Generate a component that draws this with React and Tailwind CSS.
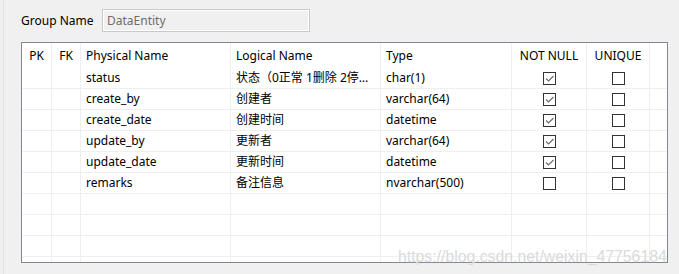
import React from "react";

const cols = [
  { w: "w-[30px]", align: "center" },
  { w: "w-[29px]", align: "center" },
  { w: "w-[150px]", align: "left", pl: "pl-[5px]" },
  { w: "w-[150px]", align: "left", pl: "pl-[5px]" },
  { w: "w-[131px]", align: "left", pl: "pl-[5px]" },
  { w: "w-[75px]", align: "center" },
  { w: "w-[63px]", align: "center" },
];

const rows = [
  ["status", "状态（0正常 1删除 2停用）", "char(1)", true, false],
  ["create_by", "创建者", "varchar(64)", true, false],
  ["create_date", "创建时间", "datetime", true, false],
  ["update_by", "更新者", "varchar(64)", true, false],
  ["update_date", "更新时间", "datetime", true, false],
  ["remarks", "备注信息", "nvarchar(500)", false, false],
  null,
  null,
  null,
  null,
];

function Box({ checked }) {
  return (
    <div className="w-[13px] h-[13px] border border-[#333333] bg-white flex items-center justify-center">
      {checked && (
        <svg width="11" height="11" viewBox="0 0 11 11">
          <path d="M2 5.5 L4.5 8 L9.5 3" fill="none" stroke="#6a6a6a" strokeWidth="1.1" />
        </svg>
      )}
    </div>
  );
}

function Cell({ i, children, header }) {
  const c = cols[i];
  return (
    <div
      className={`${c.w} shrink-0 h-full flex items-center border-r border-[#efefef] overflow-hidden whitespace-nowrap ${
        c.align === "center" ? "justify-center" : "justify-start pr-[4px] " + c.pl
      } ${header ? "border-[#e6e6e6]" : ""}`}
    >
      {children}
    </div>
  );
}

export default function App() {
  const font = { fontFamily: '"Noto Sans", "Noto Sans CJK SC", sans-serif' };
  return (
    <div
      className="relative w-[679px] h-[274px] bg-[#f0f0f0] pl-[3px] overflow-hidden text-[12px] text-[#000]"
      style={font}
    >
      <div className="h-full border-l border-[#e2e2e2] pl-[17px] pt-[9px]">
        <div className="flex items-center h-[23px]">
          <div className="w-[81px] leading-none">Group Name</div>
          <div className="w-[208px] h-[23px] border border-[#c9c9c9] shadow-[inset_0_0_0_1px_#ffffff] flex items-center pl-[4px] text-[#6d6d6d]">
            DataEntity
          </div>
        </div>
        <div className="mt-[10px] w-[647px] h-[221px] border border-[#828790] bg-white overflow-hidden">
          <div className="flex h-[25px]">
            <Cell i={0} header>PK</Cell>
            <Cell i={1} header>FK</Cell>
            <Cell i={2} header>Physical Name</Cell>
            <Cell i={3} header>Logical Name</Cell>
            <Cell i={4} header>Type</Cell>
            <Cell i={5} header>NOT NULL</Cell>
            <Cell i={6} header>UNIQUE</Cell>
            <div className="flex-1" />
          </div>
          {rows.map((r, k) => (
            <div key={k} className="flex h-[21px] border-b border-[#efefef]">
              <Cell i={0} />
              <Cell i={1} />
              <Cell i={2}>{r && r[0]}</Cell>
              <Cell i={3}>
                {r && <span className="block overflow-hidden text-ellipsis">{r[1]}</span>}
              </Cell>
              <Cell i={4}>{r && r[2]}</Cell>
              <Cell i={5}>{r && <Box checked={r[3]} />}</Cell>
              <Cell i={6}>{r && <Box checked={r[4]} />}</Cell>
              <div className="flex-1" />
            </div>
          ))}
        </div>
      </div>
      <div
        className="absolute left-[398px] top-[245px] text-[15.8px] text-[#dadada] whitespace-nowrap [text-shadow:0_0_1px_#ffffff]"
        style={{ fontFamily: '"Liberation Sans", Arial, sans-serif' }}
      >
        https://blog.csdn.net/weixin_47756184
      </div>
    </div>
  );
}
